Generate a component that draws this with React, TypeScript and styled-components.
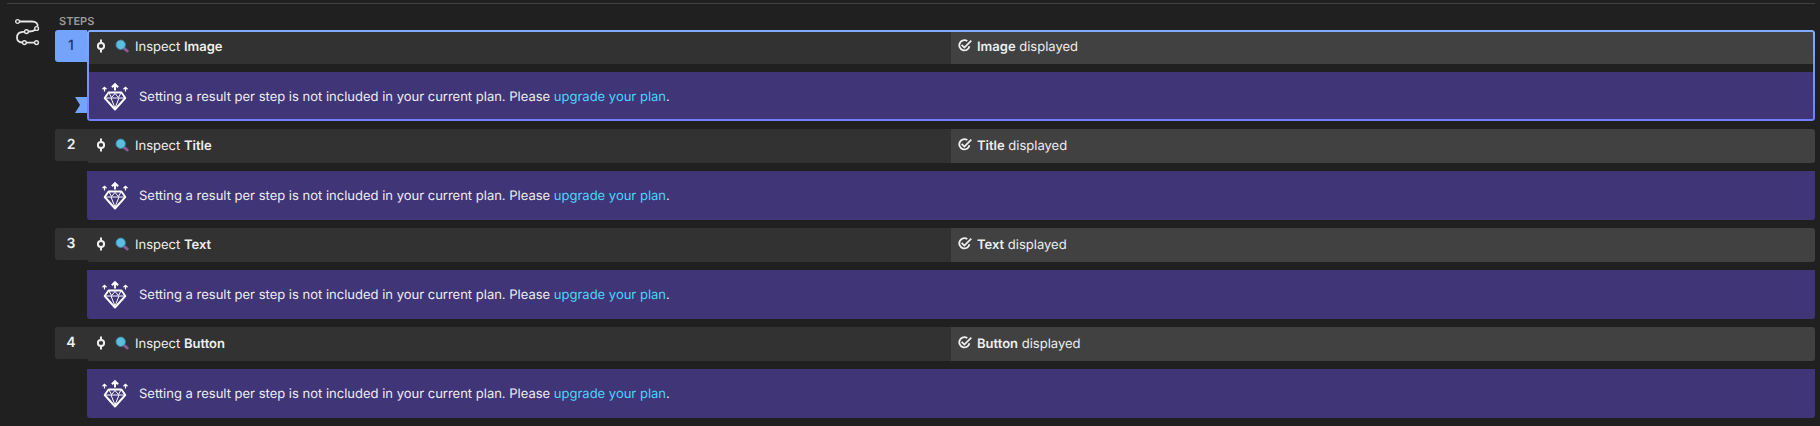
import React from "react";
import styled, { createGlobalStyle, css } from "styled-components";

const GlobalStyle = createGlobalStyle`
  *, *::before, *::after { box-sizing: border-box; }
  body {
    margin: 0;
    background: #202020;
    color: #eeeeee;
    font-family: Inter, "Liberation Sans", sans-serif;
    font-size: 13px;
    line-height: 20px;
    text-rendering: geometricPrecision;
  }
`;

const Section = styled.section`
  display: flex;
  align-items: flex-start;
  margin: 3px 5px 0 7px;
  padding-top: 10px;
  border-top: 1px solid #404040;
`;

const SectionIcon = styled.div`
  flex: none;
  width: 48px;
  padding: 4px 0 0 8px;
  svg { display: block; }
`;

const SectionBody = styled.div`
  flex: 1;
  min-width: 0;
`;

const Heading = styled.h2`
  margin: 0;
  padding: 0 0 2px 4px;
  font-size: 11px;
  line-height: 14px;
  font-weight: 600;
  color: #9c9a95;
  text-transform: uppercase;
`;

const StepList = styled.ol`
  display: flex;
  flex-direction: column;
  gap: 8px;
  margin: 0;
  padding: 0;
  list-style: none;
`;

const StepItem = styled.li`
  display: flex;
`;

const Gutter = styled.div`
  flex: none;
  display: flex;
  flex-direction: column;
  justify-content: space-between;
  align-items: flex-end;
  width: 32px;
  padding-bottom: 8px;
`;

const StepNumber = styled.span<{ $active: boolean }>`
  width: 32px;
  border-radius: 3px 0 0 3px;
  background: ${(p) => (p.$active ? "#73a3fb" : "#323232")};
  color: ${(p) => (p.$active ? "#22345a" : "#eeeeee")};
  font-size: 14px;
  font-weight: ${(p) => (p.$active ? 500 : 600)};
  line-height: 32px;
  text-align: center;
`;

const Flag = styled.span`
  width: 12px;
  height: 16px;
  background: #73a3fb;
  clip-path: polygon(0 0, 100% 0, 100% 100%, 0 100%, 5px 50%);
`;

const StepCard = styled.div<{ $active: boolean }>`
  position: relative;
  flex: 1;
  min-width: 0;
  display: flex;
  flex-direction: column;
  gap: 8px;
  ${(p) =>
    p.$active &&
    css`
      &::after {
        content: "";
        position: absolute;
        inset: 0;
        padding: 2px;
        border-radius: 3px;
        background: linear-gradient(#80adff, #6f7fff);
        mask: linear-gradient(#000 0 0) content-box exclude, linear-gradient(#000 0 0);
        pointer-events: none;
      }
    `}
`;

const Cells = styled.div`
  display: grid;
  grid-template-columns: 1fr 1fr;
  border-radius: 0 3px 3px 3px;
  overflow: hidden;
`;

const Cell = styled.div<{ $result?: boolean }>`
  display: flex;
  align-items: center;
  gap: 5px;
  height: 34px;
  padding: 0 7px 2px;
  background: ${(p) => (p.$result ? "#414141" : "#323232")};
  svg { flex: none; }
`;

const CellText = styled.p`
  margin: 0;
  padding-top: 1px;
  white-space: nowrap;
  b { font-weight: 600; }
`;

const Notice = styled.div`
  display: flex;
  align-items: center;
  gap: 10px;
  height: 49px;
  padding: 0 14px 1px;
  border-radius: 0 0 3px 3px;
  background: #3f3577;
  svg { flex: none; }
`;

const NoticeText = styled.p`
  margin: 0;
  padding-top: 1px;
`;

const PlanLink = styled.a`
  color: #4bd5f8;
  text-decoration: none;
`;

const PathIcon = () => (
  <svg width="26" height="28" viewBox="0 0 26 28" fill="none" stroke="#e6e6e6" strokeWidth="1.8" aria-hidden="true">
    <path d="M4.500 3.500H17C21 3.500 23 5.500 22.600 8.500M20 11.800C18.500 13.300 16.500 13.500 13.700 13.500M9.300 13.800H8C3.500 14 2 16.500 2 19.500C2 22.600 4 24.300 7.300 24.500M11.300 24.600H19.300" />
    <g strokeWidth="1.4">
      <circle cx="2.600" cy="3.500" r="1.900" />
      <circle cx="21.600" cy="10.500" r="1.900" />
      <circle cx="11.500" cy="13.600" r="1.900" />
      <circle cx="9.400" cy="24.600" r="1.900" />
      <circle cx="21.500" cy="24.600" r="1.900" />
    </g>
  </svg>
);

const CommitIcon = () => (
  <svg width="14" height="14" viewBox="0 0 14 14" fill="none" stroke="#eeeeee" strokeWidth="2" aria-hidden="true">
    <circle cx="7" cy="7" r="3.100" />
    <path d="M7 0.500V4M7 10V13.500" />
  </svg>
);

const LensGlyph = styled.svg`
  margin: 0 1px 0 2px;
`;

const LensIcon = () => (
  <LensGlyph width="14" height="14" viewBox="0 0 14 14" aria-hidden="true">
    <path d="M9.500 9.600L12.200 12" stroke="#8a5a98" strokeWidth="3" strokeLinecap="round" />
    <circle cx="5.700" cy="5.800" r="4.700" fill="#5bbfe0" stroke="#3f86a6" strokeWidth="0.900" />
  </LensGlyph>
);

const CheckIcon = () => (
  <svg width="14" height="14" viewBox="0 0 14 14" fill="none" stroke="#eeeeee" strokeWidth="1.800" aria-hidden="true">
    <path d="M9.300 2.100A5.100 5.100 0 1 0 11.400 7.300" />
    <path d="M3.600 5.900L6.400 8.600L13.300 1.700" />
  </svg>
);

const DiamondIcon = () => (
  <svg width="28" height="30" viewBox="0 -2 28 30" fill="none" stroke="#ffffff" aria-hidden="true">
    <path d="M7.500 9.500H20.500L24.300 15L14 26.500L3.700 15Z" strokeWidth="1.900" strokeLinejoin="round" />
    <path d="M4 15H24M10 15L14 25L18 15M8 10L10.500 14.500L14 10.500L17.500 14.500L20 10" strokeWidth="1" />
    <path d="M14 7.500V1.500" strokeWidth="2.100" />
    <path d="M10.900 4.300L14 1.200L17.100 4.300" strokeWidth="2" />
    <path d="M3.500 8.500V4.500M24.500 8.500V4.500" strokeWidth="1.200" />
    <path d="M1.500 6.200L3.500 4.500L5.500 6.200M22.500 6.200L24.500 4.500L26.500 6.200" strokeWidth="1.400" />
  </svg>
);

const targets = ["Image", "Title", "Text", "Button"];

const Step = ({ number, target, active }: { number: number; target: string; active: boolean }) => (
  <StepItem aria-current={active ? "step" : undefined}>
    <Gutter>
      <StepNumber $active={active}>{number}</StepNumber>
      {active && <Flag />}
    </Gutter>
    <StepCard $active={active}>
      <Cells>
        <Cell>
          <CommitIcon />
          <LensIcon />
          <CellText>Inspect <b>{target}</b></CellText>
        </Cell>
        <Cell $result>
          <CheckIcon />
          <CellText><b>{target}</b> displayed</CellText>
        </Cell>
      </Cells>
      <Notice>
        <DiamondIcon />
        <NoticeText>
          Setting a result per step is not included in your current plan. Please{" "}
          <PlanLink href="#upgrade">upgrade your plan</PlanLink>.
        </NoticeText>
      </Notice>
    </StepCard>
  </StepItem>
);

export default function App() {
  return (
    <>
      <GlobalStyle />
      <Section>
        <SectionIcon><PathIcon /></SectionIcon>
        <SectionBody>
          <Heading>Steps</Heading>
          <StepList>
            {targets.map((target, i) => (
              <Step key={target} number={i + 1} target={target} active={i === 0} />
            ))}
          </StepList>
        </SectionBody>
      </Section>
    </>
  );
}
